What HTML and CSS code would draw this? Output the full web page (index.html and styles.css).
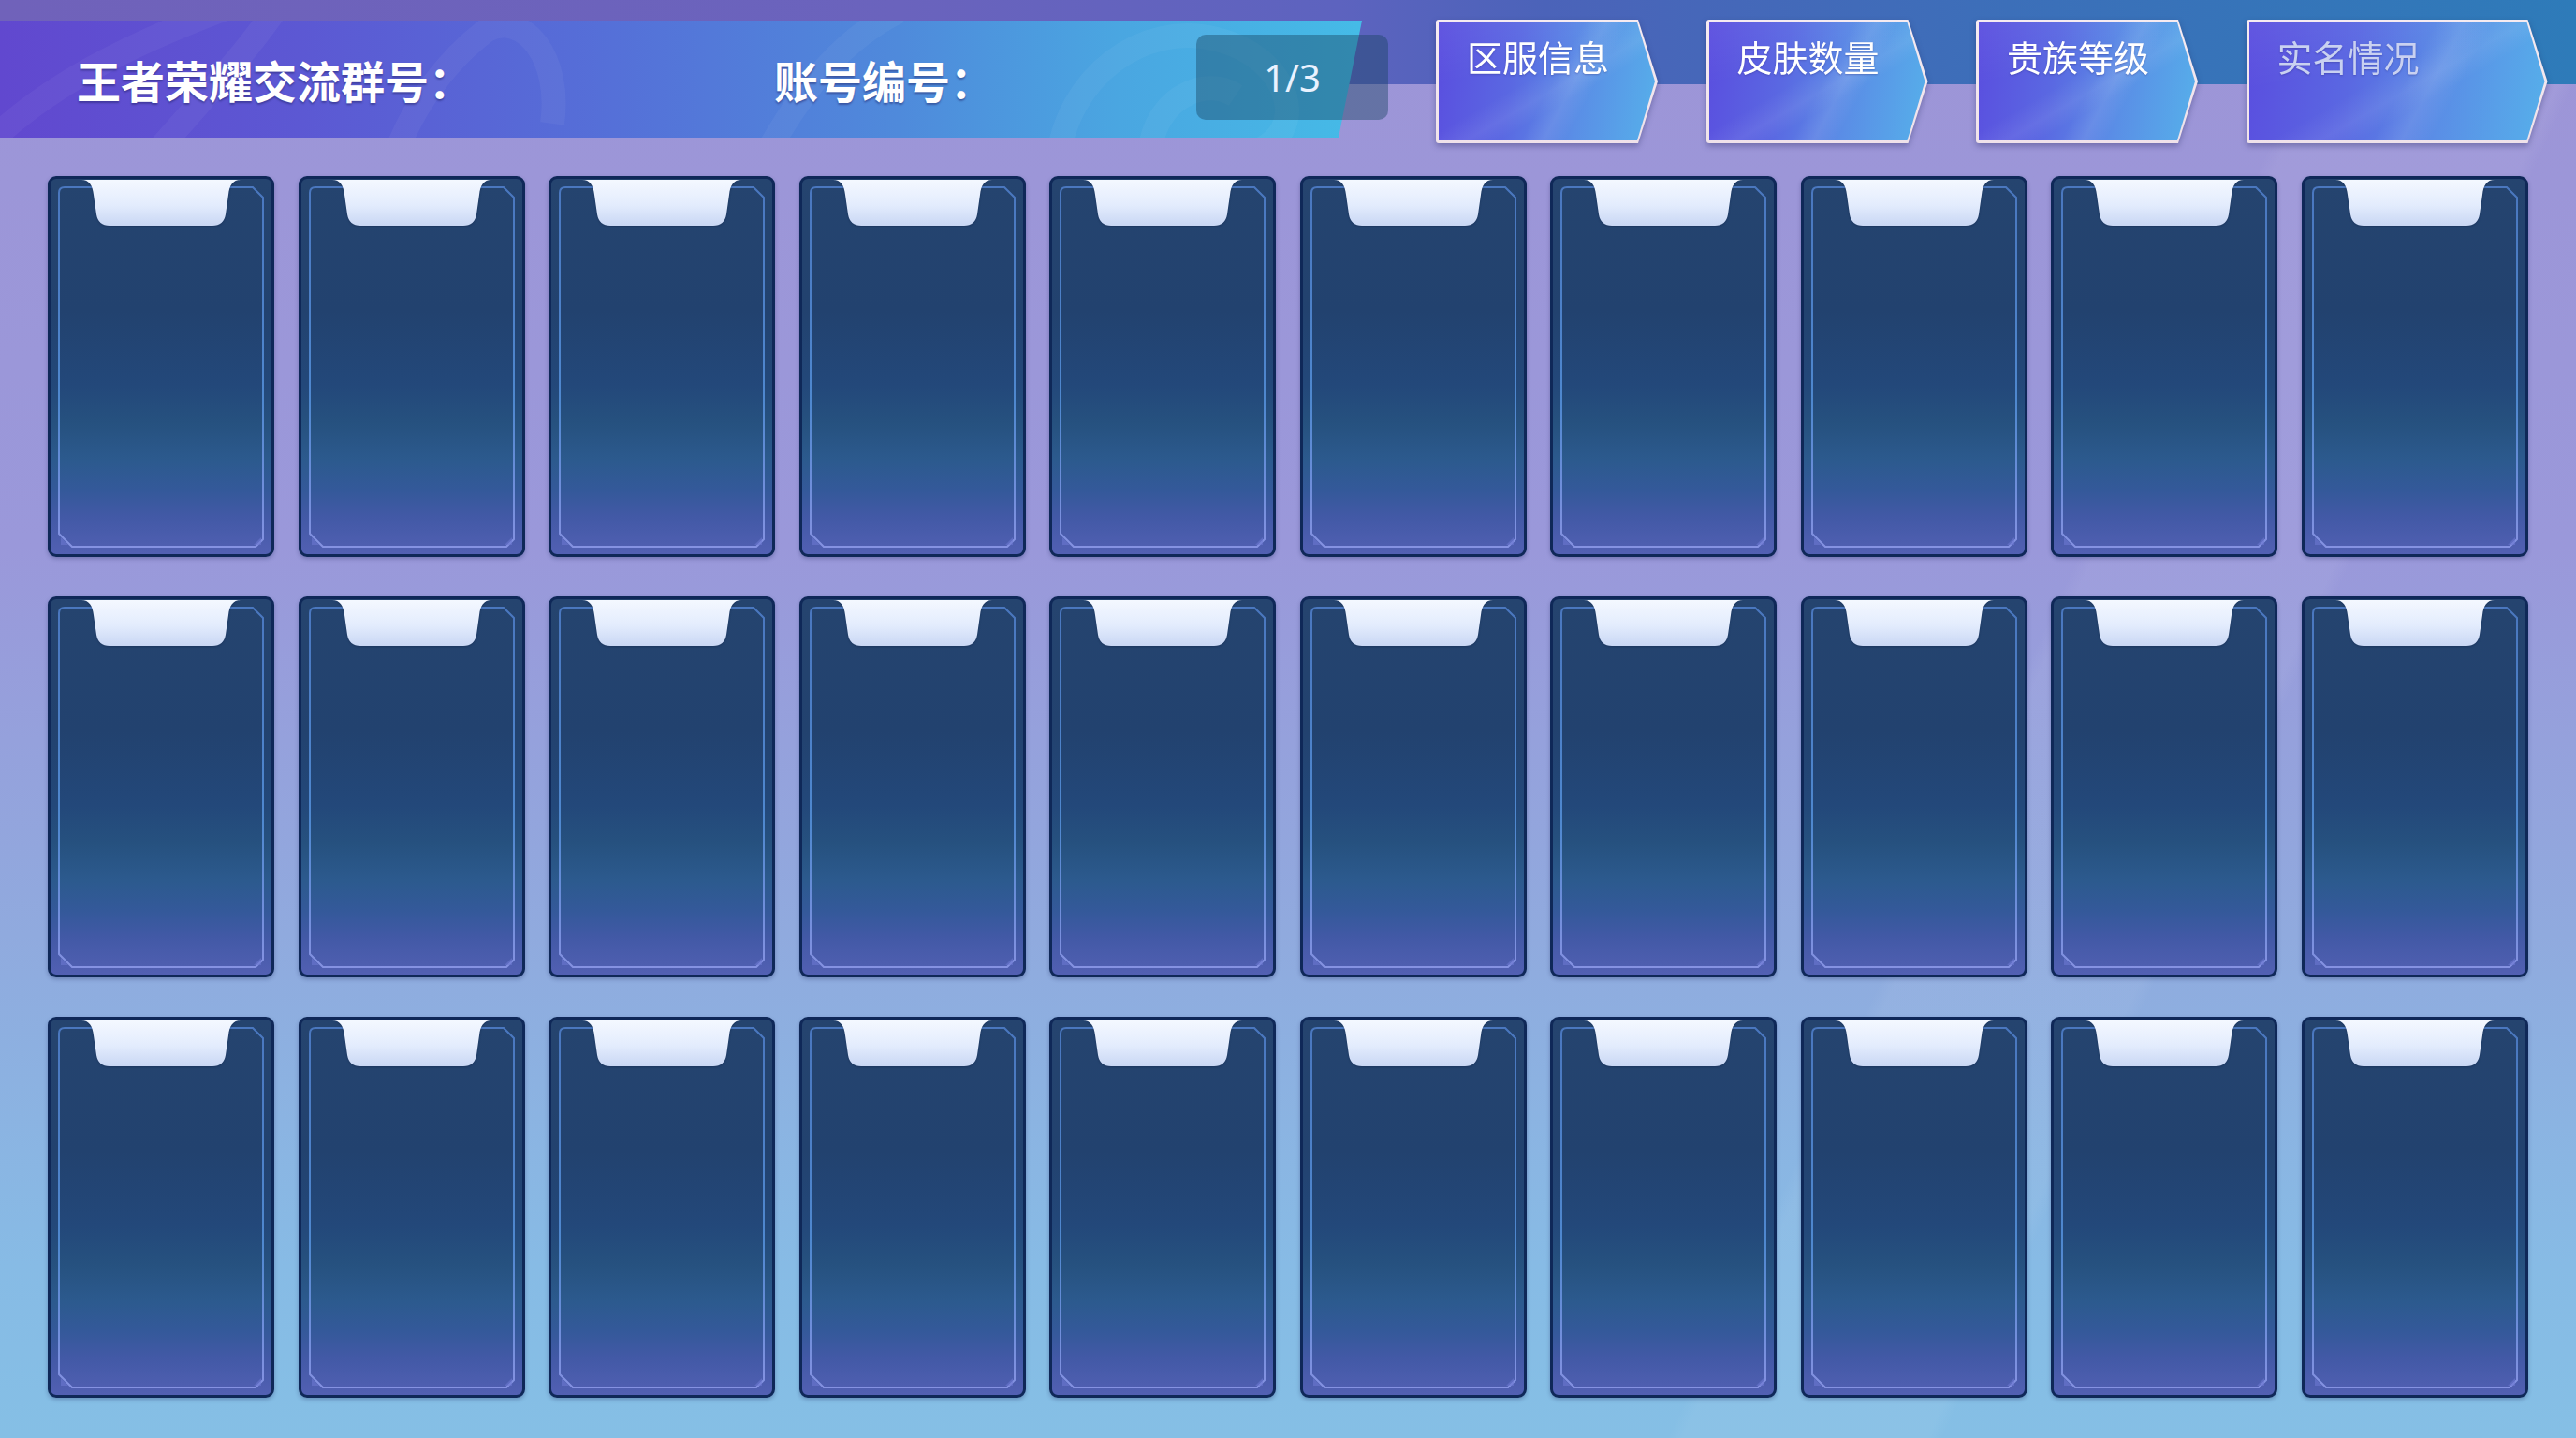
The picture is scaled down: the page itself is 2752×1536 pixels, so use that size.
FILE: index.html
```html
<!DOCTYPE html>
<html lang="zh-CN">
<head>
<meta charset="utf-8">
<title>王者荣耀账号</title>
<link rel="stylesheet" href="styles.css">
</head>
<body>
<svg class="defs" width="0" height="0" aria-hidden="true">
  <defs>
    <linearGradient id="notchFill" x1="0" y1="0" x2="0" y2="1">
      <stop offset="0" stop-color="#f4f8ff"/>
      <stop offset="0.55" stop-color="#e3ecfd"/>
      <stop offset="1" stop-color="#c9d7f4"/>
    </linearGradient>
    <linearGradient id="frameStroke" x1="0" y1="0" x2="0" y2="1">
      <stop offset="0" stop-color="#4a77bf"/>
      <stop offset="0.6" stop-color="#4f88cf"/>
      <stop offset="1" stop-color="#8592e2"/>
    </linearGradient>
  </defs>
  <symbol id="notch" viewBox="0 0 170 50">
    <path d="M0,0 H170 C162,0 158,6 157,16 L154,37 Q152,49 140,49 H30 Q18,49 16,37 L13,16 C12,6 8,0 0,0 Z" fill="url(#notchFill)"/>
  </symbol>
  <symbol id="frame" viewBox="0 0 236 401">
    <path d="M15,9 H216 L227,20 V385 L219,393 H23 L9,379 V15 Q9,9 15,9 Z" fill="none" stroke="url(#frameStroke)" stroke-width="2"/>
    <path d="M11,383 L19,391 H11 Z M225,383 L217,391 H225 Z" fill="#6c78d0" opacity="0.6"/>
  </symbol>
</svg>

<div class="page">
  <header class="topbar">
    <div class="banner">
      <svg class="swirls" viewBox="0 0 1455 125" preserveAspectRatio="none" aria-hidden="true">
        <g fill="none" stroke="#ffffff" stroke-opacity="0.045" stroke-width="26">
          <path d="M-30,150 C40,70 150,20 260,-20"/>
          <path d="M150,160 C210,90 260,40 300,-20"/>
          <path d="M420,150 C440,90 480,40 520,10 C560,-10 600,40 590,110"/>
          <path d="M820,140 C860,70 900,20 960,-10"/>
          <path d="M1130,150 C1140,60 1220,0 1300,20 C1380,40 1400,120 1340,140"/>
          <path d="M1230,130 C1240,80 1290,60 1320,80"/>
        </g>
      </svg>
      <div class="label label-group">王者荣耀交流群号：</div>
      <div class="label label-account">账号编号：</div>
    </div>
    <div class="pager">1/3</div>
    <nav class="tabs">
      <div class="tab tab-normal"><div class="tab-inner">区服信息</div></div>
      <div class="tab tab-normal"><div class="tab-inner">皮肤数量</div></div>
      <div class="tab tab-normal"><div class="tab-inner">贵族等级</div></div>
      <div class="tab tab-wide"><div class="tab-inner tab-dim">实名情况</div></div>
    </nav>
  </header>

  <main class="grid">
    <div class="card"><svg class="frame" viewBox="0 0 236 401"><use href="#frame"/></svg><svg class="notch" viewBox="0 0 170 50"><use href="#notch"/></svg></div>
    <div class="card"><svg class="frame" viewBox="0 0 236 401"><use href="#frame"/></svg><svg class="notch" viewBox="0 0 170 50"><use href="#notch"/></svg></div>
    <div class="card"><svg class="frame" viewBox="0 0 236 401"><use href="#frame"/></svg><svg class="notch" viewBox="0 0 170 50"><use href="#notch"/></svg></div>
    <div class="card"><svg class="frame" viewBox="0 0 236 401"><use href="#frame"/></svg><svg class="notch" viewBox="0 0 170 50"><use href="#notch"/></svg></div>
    <div class="card"><svg class="frame" viewBox="0 0 236 401"><use href="#frame"/></svg><svg class="notch" viewBox="0 0 170 50"><use href="#notch"/></svg></div>
    <div class="card"><svg class="frame" viewBox="0 0 236 401"><use href="#frame"/></svg><svg class="notch" viewBox="0 0 170 50"><use href="#notch"/></svg></div>
    <div class="card"><svg class="frame" viewBox="0 0 236 401"><use href="#frame"/></svg><svg class="notch" viewBox="0 0 170 50"><use href="#notch"/></svg></div>
    <div class="card"><svg class="frame" viewBox="0 0 236 401"><use href="#frame"/></svg><svg class="notch" viewBox="0 0 170 50"><use href="#notch"/></svg></div>
    <div class="card"><svg class="frame" viewBox="0 0 236 401"><use href="#frame"/></svg><svg class="notch" viewBox="0 0 170 50"><use href="#notch"/></svg></div>
    <div class="card"><svg class="frame" viewBox="0 0 236 401"><use href="#frame"/></svg><svg class="notch" viewBox="0 0 170 50"><use href="#notch"/></svg></div>

    <div class="card"><svg class="frame" viewBox="0 0 236 401"><use href="#frame"/></svg><svg class="notch" viewBox="0 0 170 50"><use href="#notch"/></svg></div>
    <div class="card"><svg class="frame" viewBox="0 0 236 401"><use href="#frame"/></svg><svg class="notch" viewBox="0 0 170 50"><use href="#notch"/></svg></div>
    <div class="card"><svg class="frame" viewBox="0 0 236 401"><use href="#frame"/></svg><svg class="notch" viewBox="0 0 170 50"><use href="#notch"/></svg></div>
    <div class="card"><svg class="frame" viewBox="0 0 236 401"><use href="#frame"/></svg><svg class="notch" viewBox="0 0 170 50"><use href="#notch"/></svg></div>
    <div class="card"><svg class="frame" viewBox="0 0 236 401"><use href="#frame"/></svg><svg class="notch" viewBox="0 0 170 50"><use href="#notch"/></svg></div>
    <div class="card"><svg class="frame" viewBox="0 0 236 401"><use href="#frame"/></svg><svg class="notch" viewBox="0 0 170 50"><use href="#notch"/></svg></div>
    <div class="card"><svg class="frame" viewBox="0 0 236 401"><use href="#frame"/></svg><svg class="notch" viewBox="0 0 170 50"><use href="#notch"/></svg></div>
    <div class="card"><svg class="frame" viewBox="0 0 236 401"><use href="#frame"/></svg><svg class="notch" viewBox="0 0 170 50"><use href="#notch"/></svg></div>
    <div class="card"><svg class="frame" viewBox="0 0 236 401"><use href="#frame"/></svg><svg class="notch" viewBox="0 0 170 50"><use href="#notch"/></svg></div>
    <div class="card"><svg class="frame" viewBox="0 0 236 401"><use href="#frame"/></svg><svg class="notch" viewBox="0 0 170 50"><use href="#notch"/></svg></div>

    <div class="card"><svg class="frame" viewBox="0 0 236 401"><use href="#frame"/></svg><svg class="notch" viewBox="0 0 170 50"><use href="#notch"/></svg></div>
    <div class="card"><svg class="frame" viewBox="0 0 236 401"><use href="#frame"/></svg><svg class="notch" viewBox="0 0 170 50"><use href="#notch"/></svg></div>
    <div class="card"><svg class="frame" viewBox="0 0 236 401"><use href="#frame"/></svg><svg class="notch" viewBox="0 0 170 50"><use href="#notch"/></svg></div>
    <div class="card"><svg class="frame" viewBox="0 0 236 401"><use href="#frame"/></svg><svg class="notch" viewBox="0 0 170 50"><use href="#notch"/></svg></div>
    <div class="card"><svg class="frame" viewBox="0 0 236 401"><use href="#frame"/></svg><svg class="notch" viewBox="0 0 170 50"><use href="#notch"/></svg></div>
    <div class="card"><svg class="frame" viewBox="0 0 236 401"><use href="#frame"/></svg><svg class="notch" viewBox="0 0 170 50"><use href="#notch"/></svg></div>
    <div class="card"><svg class="frame" viewBox="0 0 236 401"><use href="#frame"/></svg><svg class="notch" viewBox="0 0 170 50"><use href="#notch"/></svg></div>
    <div class="card"><svg class="frame" viewBox="0 0 236 401"><use href="#frame"/></svg><svg class="notch" viewBox="0 0 170 50"><use href="#notch"/></svg></div>
    <div class="card"><svg class="frame" viewBox="0 0 236 401"><use href="#frame"/></svg><svg class="notch" viewBox="0 0 170 50"><use href="#notch"/></svg></div>
    <div class="card"><svg class="frame" viewBox="0 0 236 401"><use href="#frame"/></svg><svg class="notch" viewBox="0 0 170 50"><use href="#notch"/></svg></div>
  </main>
</div>
</body>
</html>
```
FILE: styles.css
```css
* { box-sizing: border-box; }

html, body {
  margin: 0;
  padding: 0;
}

body {
  width: 2752px;
  height: 1536px;
  overflow: hidden;
  font-family: "Noto Sans CJK SC", "Noto Sans", sans-serif;
  background:
    linear-gradient(90deg, #7062ba 0%, #6a63bd 35%, #5d63bf 52%, #4b63b9 60%, #3c6fb9 78%, #2e7bb9 100%) top left / 100% 90px no-repeat,
    linear-gradient(115deg, rgba(255,255,255,0) 72%, rgba(255,255,255,0.05) 72.5%, rgba(255,255,255,0.05) 80%, rgba(255,255,255,0) 80.5%),
    linear-gradient(180deg, #9d95d7 0%, #9a98da 38%, #90aade 65%, #87bbe5 88%, #85bfe5 100%);
}

.defs {
  position: absolute;
  width: 0;
  height: 0;
  overflow: hidden;
}

.page {
  width: 2752px;
  height: 1536px;
}

/* ---------- top bar ---------- */
.topbar {
  display: flex;
  align-items: flex-start;
  height: 188px;
}

.banner {
  position: relative;
  display: flex;
  align-items: center;
  width: 1455px;
  height: 125px;
  margin-top: 22px;
  clip-path: polygon(0 0, 100% 0, 1430px 100%, 0 100%);
  background: linear-gradient(90deg, #6148cf 0%, #5c58d3 22%, #5570d8 45%, #4f8adb 66%, #4aa6e1 82%, #45bbe7 100%);
}

.swirls {
  position: absolute;
  inset: 0;
  width: 100%;
  height: 100%;
}

.label {
  position: relative;
  color: #ffffff;
  font-size: 47px;
  font-weight: 700;
  line-height: 1;
  letter-spacing: 0;
  text-shadow: 0 2px 2px rgba(30, 30, 100, 0.45);
  white-space: nowrap;
}

.label-group {
  margin-left: 82px;
  width: 745px;
}

.label-account {
  width: 451px;
}

.pager {
  position: relative;
  z-index: 1;
  display: flex;
  align-items: center;
  justify-content: center;
  width: 205px;
  height: 91px;
  margin-top: 37px;
  margin-left: -177px;
  border-radius: 10px;
  background: rgba(24, 66, 96, 0.42);
  color: #eaf2ff;
  font-family: "Noto Sans", "Open Sans", sans-serif;
  font-size: 40px;
  font-weight: 400;
  line-height: 1;
}

.tabs {
  display: flex;
  gap: 51.5px;
  margin-left: 51px;
  margin-top: 21px;
  filter: drop-shadow(0 3px 3px rgba(30, 35, 90, 0.35));
}

.tab {
  height: 132px;
  padding: 3px;
  background: linear-gradient(180deg, #f6ebf1 0%, #efe2ea 100%);
  clip-path: polygon(0 0, calc(100% - 21px) 0, 100% 50%, calc(100% - 21px) 100%, 0 100%);
  border-radius: 3px;
}

.tab-normal { width: 237px; }
.tab-wide { width: 322px; }

.tab-inner {
  height: 100%;
  padding-left: 30px;
  padding-top: 15px;
  clip-path: polygon(0 0, calc(100% - 19px) 0, 100% 50%, calc(100% - 19px) 100%, 0 100%);
  background:
    linear-gradient(118deg, rgba(255,255,255,0) 52%, rgba(255,255,255,0.09) 60%, rgba(255,255,255,0) 68%),
    linear-gradient(150deg, rgba(255,255,255,0) 45%, rgba(255,255,255,0.07) 55%, rgba(255,255,255,0) 63%),
    linear-gradient(170deg, rgba(255,255,255,0.05) 0%, rgba(255,255,255,0) 40%),
    linear-gradient(100deg, #5a4ddf 0%, #5a68e2 35%, #5a8ee6 65%, #56b0ea 100%);
  color: #ffffff;
  font-size: 38px;
  font-weight: 400;
  line-height: 1.1;
  white-space: nowrap;
  text-shadow: 0 1px 2px rgba(40, 40, 120, 0.35);
}

.tab-dim {
  color: #c9d1f1;
}

/* ---------- card grid ---------- */
.grid {
  display: grid;
  grid-template-columns: repeat(10, 242px);
  grid-auto-rows: 407px;
  column-gap: 25.5px;
  row-gap: 42px;
  padding-left: 51px;
}

.card {
  position: relative;
  border: 3px solid #0f2858;
  border-radius: 9px;
  background: linear-gradient(180deg, #25446f 0%, #22426f 35%, #23487a 55%, #26517f 65%, #2c5a8e 75%, #34599a 83%, #4259a6 90%, #5260b3 100%);
  box-shadow: 0 2px 4px rgba(25, 35, 90, 0.3);
}

.frame {
  position: absolute;
  inset: 0;
  width: 100%;
  height: 100%;
}

.notch {
  position: absolute;
  top: 1px;
  left: 50%;
  width: 170px;
  height: 50px;
  transform: translateX(-50%);
  filter: drop-shadow(0 1px 1px rgba(10, 25, 60, 0.35));
}
```
